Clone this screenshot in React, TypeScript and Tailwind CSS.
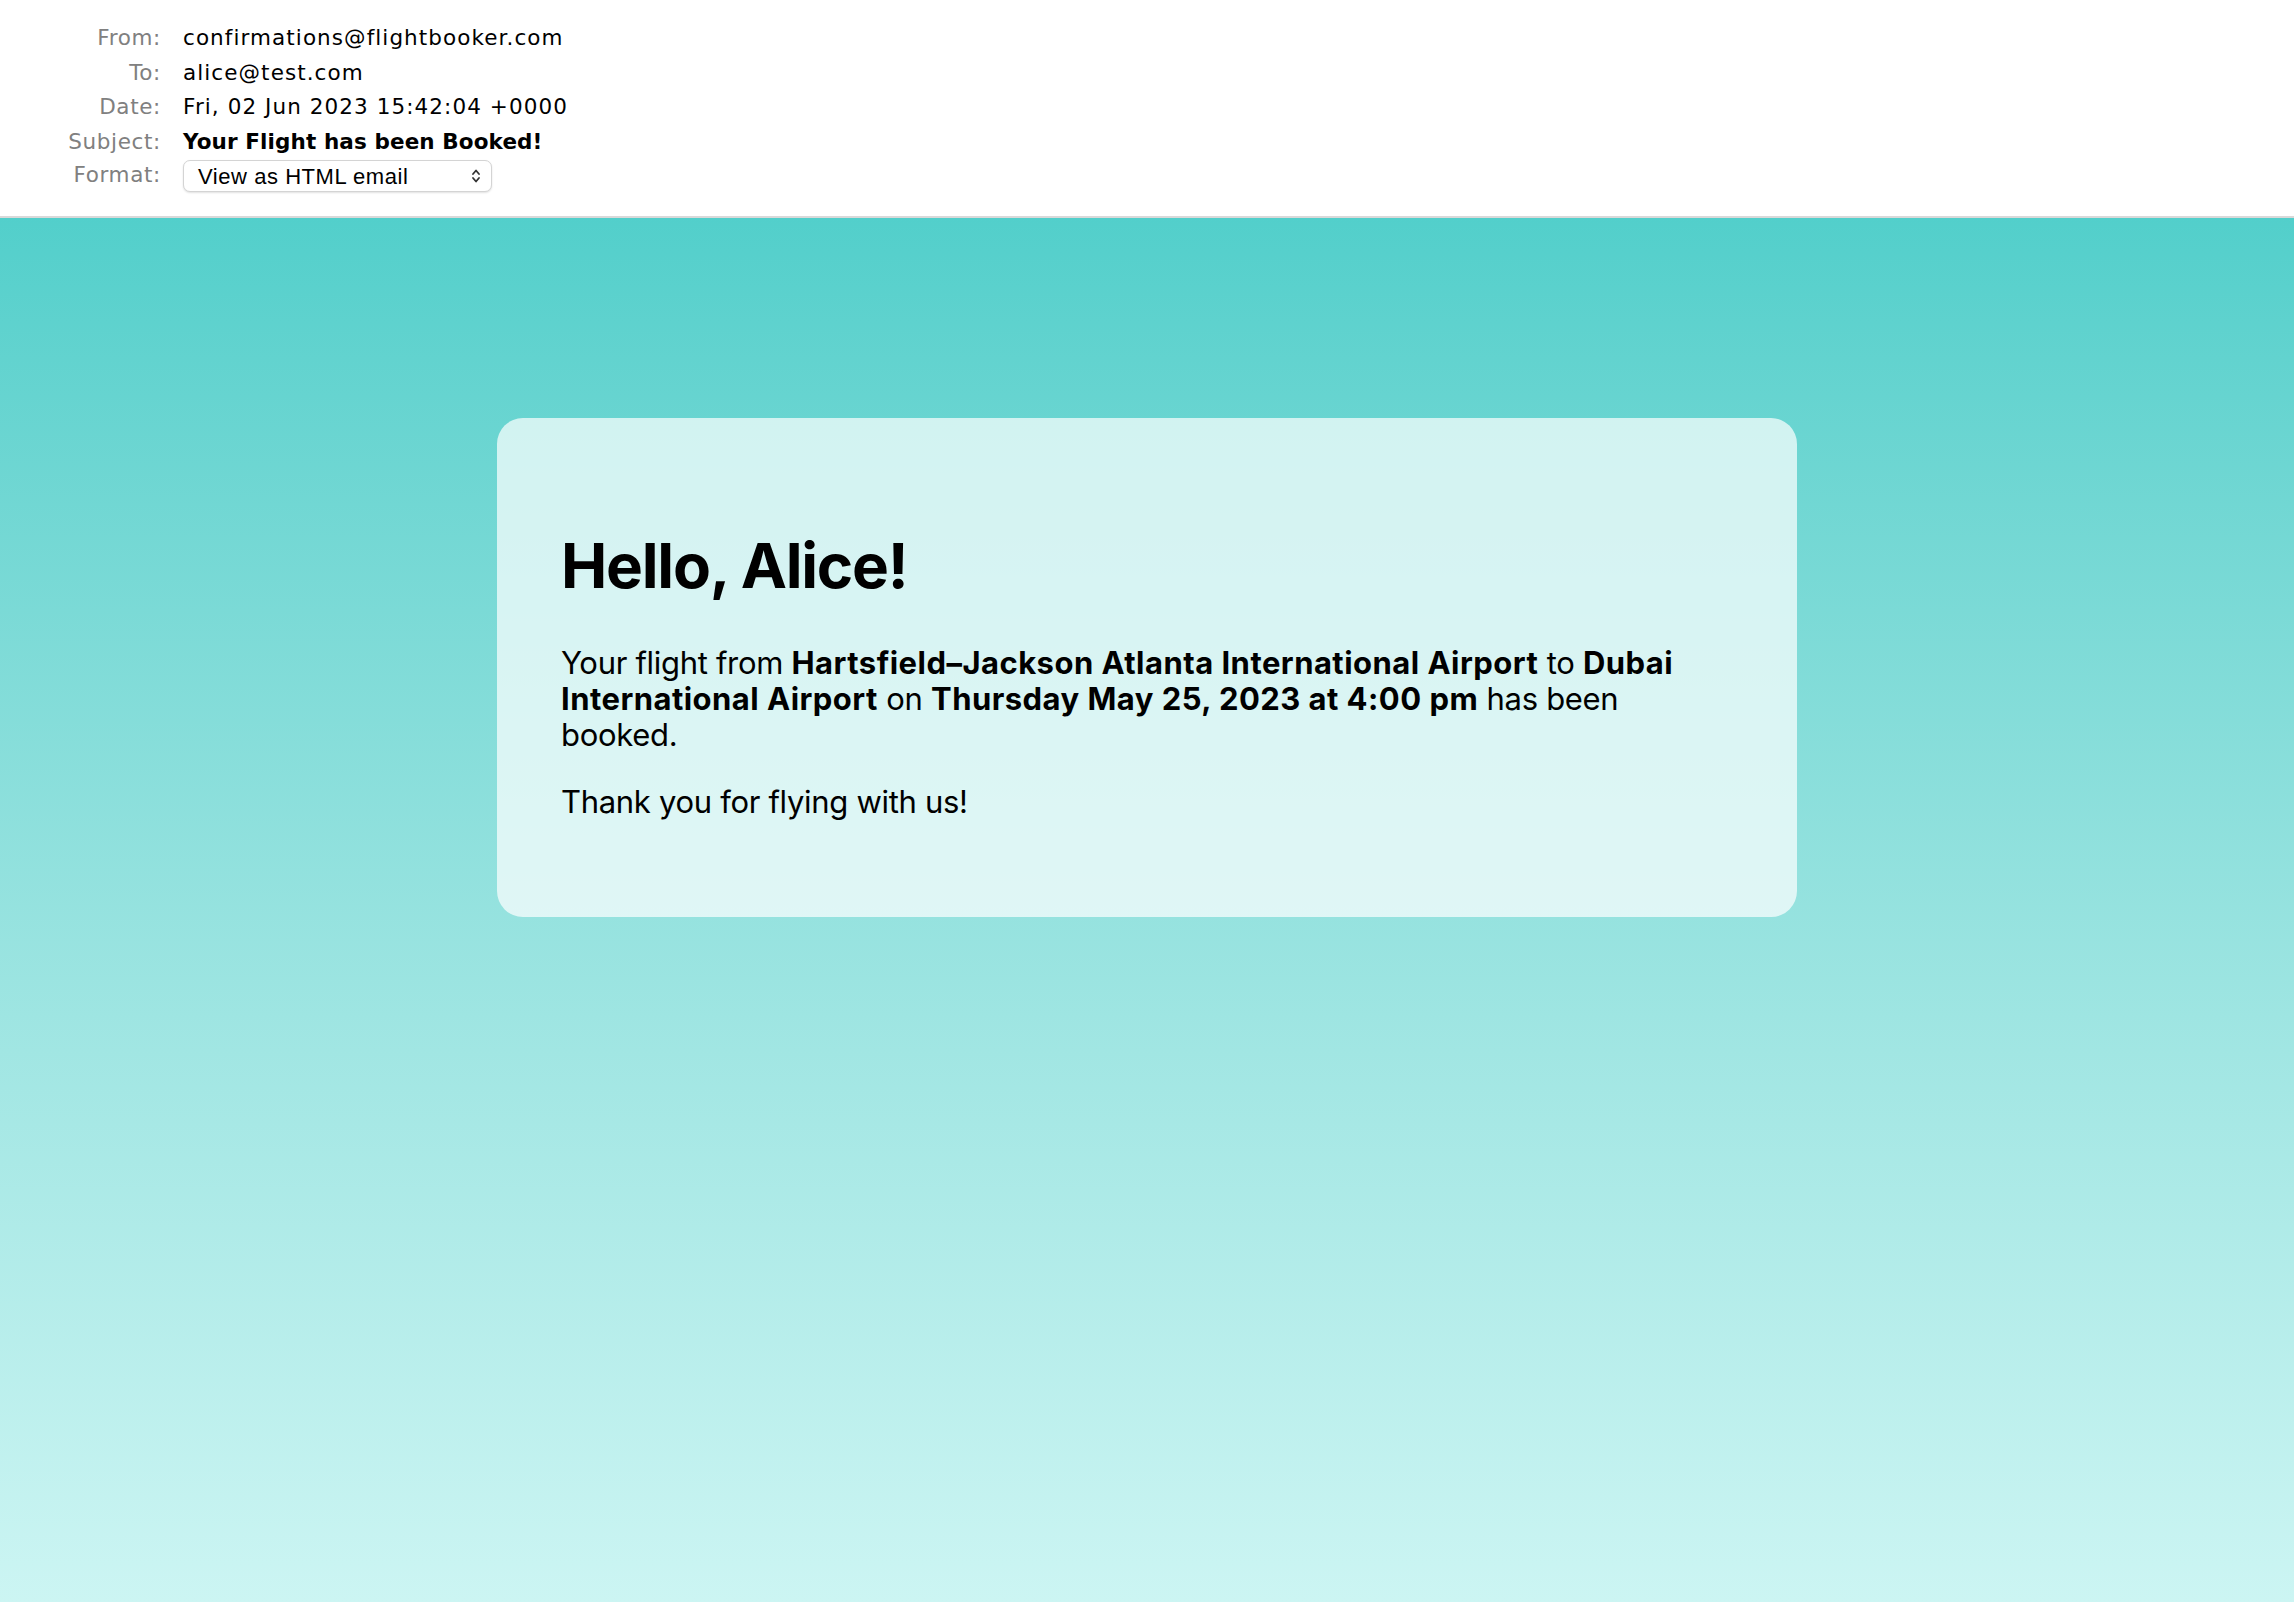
export default function App() {
  const rows = [
    { label: 'From:', value: 'confirmations@flightbooker.com' },
    { label: 'To:', value: 'alice@test.com' },
    { label: 'Date:', value: 'Fri, 02 Jun 2023 15:42:04 +0000' },
  ]

  return (
    <div className="min-h-screen flex flex-col bg-white">
      <header
        className="h-[218px] border-b-2 border-[#d9d9d9] pt-[21px] text-[21.5px] tracking-[0.05em]"
        style={{ fontFamily: '"DejaVu Sans", "Liberation Sans", sans-serif' }}
      >
        {rows.map((row) => (
          <div key={row.label} className="flex items-center h-[34.5px] gap-[22px]">
            <div className="w-[161px] text-right text-[#808080] tracking-[0.03em]">{row.label}</div>
            <div className="text-black">{row.value}</div>
          </div>
        ))}
        <div className="flex items-center h-[34.5px] gap-[22px]">
          <div className="w-[161px] text-right text-[#808080] tracking-[0.03em]">Subject:</div>
          <div className="text-black font-bold tracking-[0.005em]">Your Flight has been Booked!</div>
        </div>
        <div className="flex items-start gap-[22px] mt-[1px]">
          <div className="w-[161px] text-right text-[#808080] tracking-[0.03em] leading-[30px]">Format:</div>
          <div
            className="w-[309px] h-[32px] rounded-[7px] border border-[#d4d4d4] bg-white shadow-[0_1px_2px_rgba(0,0,0,0.12)] flex items-center justify-between pl-[14px] pr-[10px] text-[22px] tracking-[0.025em]"
            style={{ fontFamily: '"Liberation Sans", Arial, sans-serif' }}
          >
            <span>View as HTML email</span>
            <svg width="10" height="16" viewBox="0 0 10 16" fill="none" stroke="#333" strokeWidth="1.8" strokeLinecap="round" strokeLinejoin="round">
              <path d="M2 6l3-3.5L8 6" />
              <path d="M2 10l3 3.5L8 10" />
            </svg>
          </div>
        </div>
      </header>

      <main
        className="flex-1 bg-gradient-to-b from-[#52cfcb] to-[#ccf5f3] pt-[200px]"
        style={{ fontFamily: 'Inter, "Liberation Sans", sans-serif' }}
      >
        <div className="mx-auto w-[1300px] rounded-[26px] bg-white/70 pl-[64px] pr-[80px] pt-[117px] pb-[97px] text-black">
          <h1 className="text-[62px] leading-none font-bold tracking-[-0.02em]">Hello, Alice!</h1>
          <p className="mt-[48px] text-[31px] leading-[36px] tracking-[-0.01em]">
            Your flight from <b className="font-bold tracking-[0.015em]">Hartsfield–Jackson Atlanta International Airport</b> to{' '}
            <b className="font-bold tracking-[0.015em]">Dubai International Airport</b> on{' '}
            <b className="font-bold tracking-[0.015em]">Thursday May 25, 2023 at 4:00 pm</b> has been booked.
          </p>
          <p className="mt-[31px] text-[31px] leading-[36px] tracking-[-0.01em]">Thank you for flying with us!</p>
        </div>
      </main>
    </div>
  )
}
